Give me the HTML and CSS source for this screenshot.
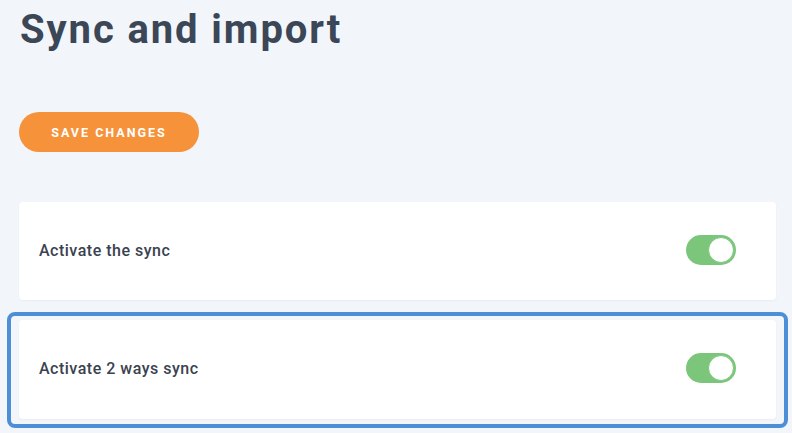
FILE: index.html
```html
<!DOCTYPE html>
<html lang="en">
<head>
<meta charset="utf-8">
<title>Sync and import</title>
<link rel="stylesheet" href="styles.css">
</head>
<body>
<main class="page">
  <h1 class="title">Sync and import</h1>
  <button class="save-btn" type="button">SAVE CHANGES</button>
  <div class="settings">
    <div class="card">
      <span class="label">Activate the sync</span>
      <span class="toggle on" role="switch" aria-checked="true"><span class="knob"></span></span>
    </div>
    <div class="focus-ring">
      <div class="card">
        <span class="label">Activate 2 ways sync</span>
        <span class="toggle on" role="switch" aria-checked="true"><span class="knob"></span></span>
      </div>
    </div>
  </div>
</main>
</body>
</html>
```
FILE: styles.css
```css
* { box-sizing: border-box; }
html, body { margin: 0; padding: 0; }
body {
  background: #f2f5fa;
  font-family: Roboto, "Liberation Sans", Arial, sans-serif;
  width: 792px;
  height: 433px;
  overflow: hidden;
}
.page {
  padding: 0 16px 0 19px;
  display: flex;
  flex-direction: column;
  align-items: flex-start;
}
.title {
  margin: 6px 0 0 1px;
  font-size: 40px;
  line-height: 48px;
  font-weight: 700;
  letter-spacing: 1.9px;
  color: #3b4756;
}
.save-btn {
  margin-top: 58px;
  width: 180px;
  height: 40px;
  border: none;
  border-radius: 20px;
  background: #f5923a;
  color: #fff;
  font-family: Roboto, "Liberation Sans", Arial, sans-serif;
  font-size: 12.5px;
  font-weight: 700;
  letter-spacing: 2px;
  padding: 0;
}
.settings {
  margin-top: 50px;
  align-self: stretch;
  display: flex;
  flex-direction: column;
}
.card {
  background: #fff;
  border-radius: 4px;
  height: 98px;
  padding: 0 40px 0 20px;
  display: flex;
  align-items: center;
  justify-content: space-between;
  box-shadow: 0 1px 2px rgba(60, 80, 110, 0.05);
}
.label {
  font-size: 16px;
  font-weight: 500;
  color: #3a4250;
  letter-spacing: 0.5px;
  margin-top: -2px;
}
.toggle {
  width: 50px;
  height: 30px;
  border-radius: 15px;
  background: #7cc67b;
  display: flex;
  align-items: center;
  justify-content: flex-end;
  padding: 2px;
  margin-top: -3px;
}
.knob {
  width: 26px;
  height: 26px;
  border-radius: 50%;
  background: #fff;
  border: 1px solid #7cc67b;
}
.focus-ring {
  margin: 12px -12px 0 -12px;
  border: 4px solid #4d8fd6;
  border-radius: 8px;
  padding: 4px 8px 5px 8px;
}
.focus-ring .card { height: 99px; }
```
